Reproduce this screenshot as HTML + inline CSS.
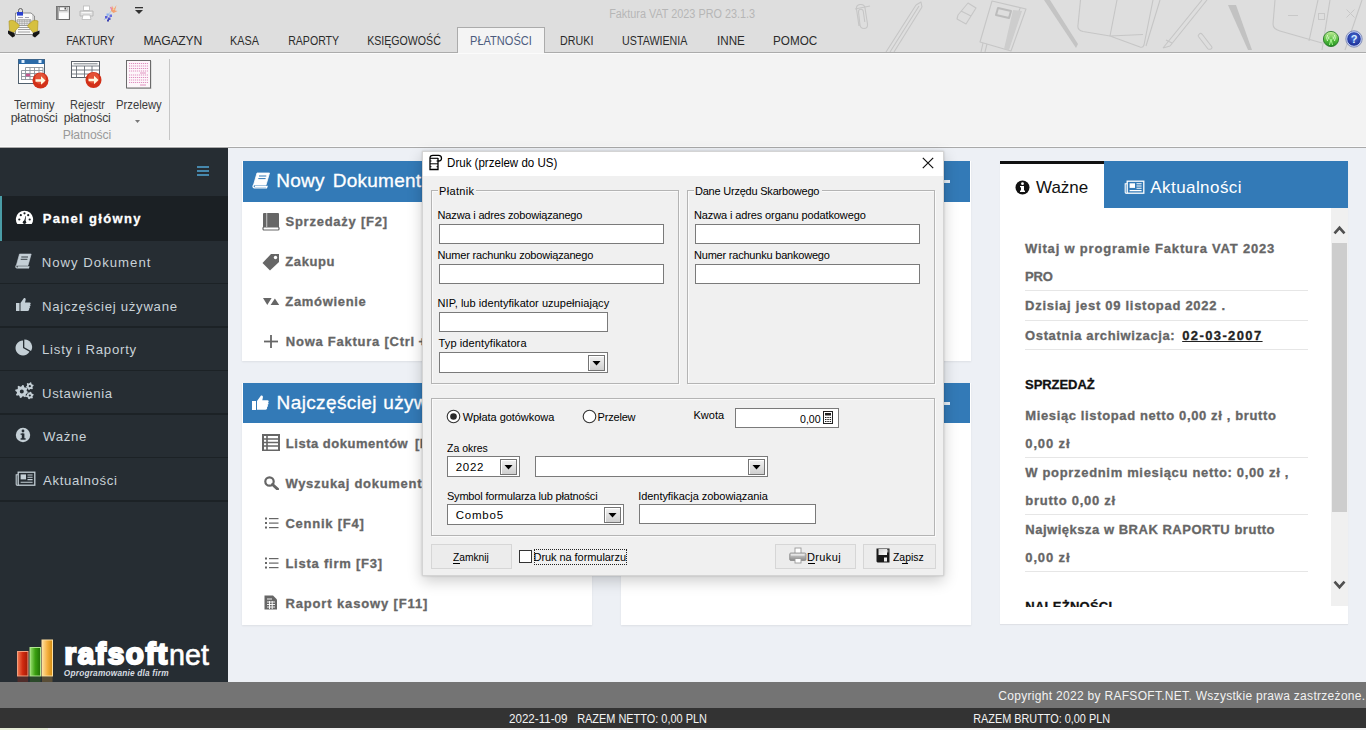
<!DOCTYPE html><html><head><meta charset="utf-8"><style>html,body{margin:0;padding:0;width:1366px;height:730px;overflow:hidden;position:relative;background:#fff;}</style></head><body><div style="position:absolute;left:0px;top:0px;width:1366px;height:52px;background:#dedede"></div>
<div style="position:absolute;left:0px;top:52px;width:1366px;height:1px;background:#ababab"></div>
<svg style="position:absolute;left:0px;top:0px;" width="1366" height="52" viewBox="0 0 1366 52">
<g fill="none" stroke="#c6c6c6" stroke-width="1.1" stroke-linejoin="round">
<path d="M859 26 L856.5 9 Q856 5 860 4.5 Q864.5 4 865 8 L867.5 24 Q868 28.5 864 28.5 Q860.5 28.5 860 25 L858.5 12 Q858.3 9.5 860.8 9.3 Q863 9.2 863.3 11.5 L864.8 22"/><path d="M855 9 L870 6"/>
<path d="M886 52 L916 5 M890 52 L919 6 M894 52 L922 7 M916 5 L921 2 L922 7"/>
<path d="M958 15 L968 3 L976 8 L966 24 L957 19 Z M961 11 L971 16"/>
<path d="M992 1 L1026 9 L1011 51 L980 42 Z M1020 8 L1007 50"/>
<path d="M998 8 L1011 11 L1009 18 L996 15 Z" stroke="#bcbcbc" stroke-width="2"/>
<path d="M983 43 L981 52 M987 44 L985 52"/>
<path d="M1080.5 0 L1078 25 Q1077 30 1083 31.5 L1110 36"/>
<path d="M1117 0 L1110 36 L1140 47 Q1143 48 1144 45 L1153 0 M1146 46 L1160 0 M1110 36 L1143 34.5"/>
<path d="M1163 48 L1202 0 M1170 46 L1207 0 M1163 48 L1170 46 M1166 40 L1172 43"/>
<path d="M1198 36 L1208 49 M1202 34 L1212 47 M1198 36 Q1200 32 1202 34 M1208 49 Q1212 50 1212 47"/>
<path d="M1275 0 L1273 24 Q1273 29 1280 31 L1322 43"/>
<path d="M1318 0 L1309 41 M1330 0 L1322 50 M1362 0 L1345 50"/>
</g>
<path d="M1044 0 L1050 0 L1078 44 L1076 48 Z" fill="#c4c4c4"/>
<path d="M1228 5 L1236 5 L1252 50 L1248 50 Z" fill="#c2c2c2"/>
<path d="M1013 10 L1022 11 L1009 50 L1004 49 Z" fill="#cdcdcd"/>
</svg>
<div style="position:absolute;left:1288px;top:15px;width:10px;height:1px;background:#c8c8c8"></div>
<div style="position:absolute;left:1318px;top:13px;width:7px;height:7px;border:1px solid #c8c8c8;box-sizing:border-box"></div>
<svg style="position:absolute;left:1346px;top:9px;" width="9" height="9" viewBox="0 0 9 9"><path d="M0.5 0.5 L8.5 8.5 M8.5 0.5 L0.5 8.5" stroke="#c8c8c8" stroke-width="1"/></svg>
<div style="position:absolute;left:609.00px;top:8px;font-family:'Liberation Sans',sans-serif;font-size:12.5px;font-weight:400;font-style:normal;line-height:12.5px;white-space:pre;color:#b6b6b6;letter-spacing:0.000px;transform:scaleX(0.8683);transform-origin:1px 0;">Faktura VAT 2023 PRO 23.1.3</div>
<div style="position:absolute;left:457px;top:27px;width:88px;height:27px;background:#f4f4f4;border:1px solid #ababab;border-bottom:none;box-sizing:border-box"></div>
<div style="position:absolute;left:66.30px;top:35px;font-family:'Liberation Sans',sans-serif;font-size:12.2px;font-weight:400;font-style:normal;line-height:12.2px;white-space:pre;color:#2b2b2b;letter-spacing:0.000px;transform:scaleX(0.8636);transform-origin:1px 0;">FAKTURY</div>
<div style="position:absolute;left:143.40px;top:35px;font-family:'Liberation Sans',sans-serif;font-size:12.2px;font-weight:400;font-style:normal;line-height:12.2px;white-space:pre;color:#2b2b2b;letter-spacing:-0.233px;">MAGAZYN</div>
<div style="position:absolute;left:230.30px;top:35px;font-family:'Liberation Sans',sans-serif;font-size:12.2px;font-weight:400;font-style:normal;line-height:12.2px;white-space:pre;color:#2b2b2b;letter-spacing:0.000px;transform:scaleX(0.8875);transform-origin:1px 0;">KASA</div>
<div style="position:absolute;left:288.30px;top:35px;font-family:'Liberation Sans',sans-serif;font-size:12.2px;font-weight:400;font-style:normal;line-height:12.2px;white-space:pre;color:#2b2b2b;letter-spacing:0.000px;transform:scaleX(0.8684);transform-origin:1px 0;">RAPORTY</div>
<div style="position:absolute;left:367.10px;top:35px;font-family:'Liberation Sans',sans-serif;font-size:12.2px;font-weight:400;font-style:normal;line-height:12.2px;white-space:pre;color:#2b2b2b;letter-spacing:0.000px;transform:scaleX(0.8711);transform-origin:1px 0;">KSIĘGOWOŚĆ</div>
<div style="position:absolute;left:469.70px;top:35px;font-family:'Liberation Sans',sans-serif;font-size:12.2px;font-weight:400;font-style:normal;line-height:12.2px;white-space:pre;color:#4c5b7e;letter-spacing:0.000px;transform:scaleX(0.9045);transform-origin:1px 0;">PŁATNOŚCI</div>
<div style="position:absolute;left:559.60px;top:35px;font-family:'Liberation Sans',sans-serif;font-size:12.2px;font-weight:400;font-style:normal;line-height:12.2px;white-space:pre;color:#2b2b2b;letter-spacing:0.000px;transform:scaleX(0.8778);transform-origin:1px 0;">DRUKI</div>
<div style="position:absolute;left:621.70px;top:35px;font-family:'Liberation Sans',sans-serif;font-size:12.2px;font-weight:400;font-style:normal;line-height:12.2px;white-space:pre;color:#2b2b2b;letter-spacing:0.000px;transform:scaleX(0.8757);transform-origin:1px 0;">USTAWIENIA</div>
<div style="position:absolute;left:716.50px;top:35px;font-family:'Liberation Sans',sans-serif;font-size:12.2px;font-weight:400;font-style:normal;line-height:12.2px;white-space:pre;color:#2b2b2b;letter-spacing:0.000px;transform:scaleX(0.9536);transform-origin:1px 0;">INNE</div>
<div style="position:absolute;left:772.50px;top:35px;font-family:'Liberation Sans',sans-serif;font-size:12.2px;font-weight:400;font-style:normal;line-height:12.2px;white-space:pre;color:#2b2b2b;letter-spacing:0.000px;transform:scaleX(0.9600);transform-origin:1px 0;">POMOC</div>
<svg style="position:absolute;left:0px;top:0px;" width="48" height="42" viewBox="0 0 48 42">
<path d="M15.5 13 H31 L34.5 16 V34.5 H15.5 Z" fill="#fafafa" stroke="#777" stroke-width="0.8"/>
<path d="M33 15 V33" stroke="#999" stroke-width="0.8"/>
<path d="M18 17.5 h5 M25 17.5 h4" stroke="#8a8aa0" stroke-width="0.8"/>
<path d="M17 19.8 H31 V25.5 H17 Z" fill="#e4e4e4" stroke="#777" stroke-width="0.7"/>
<path d="M17 21.6 H31 M17 23.5 H31 M19.5 19.8 V25.5 M22 19.8 V25.5 M24.5 19.8 V25.5 M27 19.8 V25.5 M29.5 19.8 V25.5" stroke="#999" stroke-width="0.5"/>
<path d="M18 27.5 h12 M18 29.5 h12 M18 32 h12" stroke="#888" stroke-width="0.8"/>
<path d="M18.5 12.5 V10.5 A2 2 0 0 1 22.5 10.5 V12.5" fill="none" stroke="#555" stroke-width="0.9"/>
<rect x="17" y="12" width="6" height="3.6" fill="#2a40d0"/>
<path d="M9 21 Q12 19.5 14.5 21 L19 25 Q20 26.5 18.5 27 L16 30 L14 32.5 L9.5 31 Z" fill="#d6c040" stroke="#a89020" stroke-width="0.6"/>
<path d="M38 21 Q35 19.5 32.5 21 L28 25 Q27 26.5 28.5 27 L31 30 L33 32.5 L37.5 31 Z" fill="#d6c040" stroke="#a89020" stroke-width="0.6"/>
<path d="M8 30.5 L14.5 33 L15 36 L12.5 37.5 L8 33.5 Z" fill="#151515"/>
<path d="M39.5 30.5 L33 33 L32.5 36 L35 37.5 L39.5 33.5 Z" fill="#151515"/>
</svg>
<svg style="position:absolute;left:56px;top:6px;" width="14" height="14" viewBox="0 0 14 14"><rect x="0.5" y="0.5" width="13" height="13" fill="#d9d9d9" stroke="#6a6a6a"/><rect x="0.5" y="0.5" width="2" height="13" fill="#8a8a8a"/><rect x="3.5" y="1" width="7.5" height="3.5" fill="#fafafa" stroke="#777" stroke-width="0.6"/><rect x="8.5" y="1.5" width="1.5" height="2" fill="#555"/><rect x="3" y="6.5" width="9.5" height="6.5" fill="#fbfbfb"/></svg>
<svg style="position:absolute;left:79px;top:5px;" width="15" height="15" viewBox="0 0 15 15"><rect x="4.5" y="1" width="6" height="4.5" fill="#fff" stroke="#bbb" stroke-width="0.8"/><path d="M1 6 h13 v5 h-13z" fill="#e2e2e2" stroke="#b0b0b0" stroke-width="0.8"/><rect x="2.5" y="7" width="10" height="1" fill="#f8f8f8"/><path d="M4 10 h7 l1 4.5 h-9z" fill="#fff" stroke="#b8b8b8" stroke-width="0.8"/></svg>
<svg style="position:absolute;left:102px;top:4px;" width="16" height="18" viewBox="0 0 16 18"><path d="M2 16 L10 6" stroke="#a8c8e8" stroke-width="1"/><rect x="3" y="12" width="2.5" height="2.5" fill="#5a60d8"/><rect x="6" y="13.5" width="2.5" height="2.5" fill="#4a50c8"/><rect x="4.5" y="9.5" width="2.2" height="2.2" fill="#8ab0f0"/><rect x="7.5" y="10.5" width="2.5" height="2.5" fill="#6a70e0"/><rect x="5" y="15.5" width="2" height="2" fill="#3a40b0"/><path d="M9 7 L10 1.5 L11.5 5.5 L14.5 1 L13 6.5 L15.5 7 L11.5 9 Z" fill="#f4a070"/><path d="M10.5 6 L11.5 3 L12.5 6 Z" fill="#f8d090"/><path d="M8.5 3 L10 6" stroke="#e880b0" stroke-width="1.2"/></svg>
<svg style="position:absolute;left:135px;top:7px;" width="9" height="8" viewBox="0 0 9 8"><rect x="0" y="0" width="8" height="1.3" fill="#333"/><path d="M0 3 L8 3 L4 7z" fill="#333"/></svg>
<svg style="position:absolute;left:1322px;top:30px;" width="18" height="18" viewBox="0 0 18 18"><defs><linearGradient id="gng" x1="0" y1="0" x2="0" y2="1"><stop offset="0" stop-color="#c8f0a0"/><stop offset="0.55" stop-color="#58c040"/><stop offset="1" stop-color="#208a20"/></linearGradient></defs><circle cx="9" cy="9" r="7.6" fill="url(#gng)" stroke="#2a7a2a" stroke-width="0.9"/><path d="M9 9 L7.5 15 M9 9 L10.5 15" stroke="#a8f890" stroke-width="1"/><path d="M5.5 5 Q4 8 5.5 11 M12.5 5 Q14 8 12.5 11 M7 6.5 Q6.3 8 7 9.5 M11 6.5 Q11.7 8 11 9.5" fill="none" stroke="#e8ffd8" stroke-width="0.9"/></svg>
<svg style="position:absolute;left:1345px;top:30px;" width="18" height="18" viewBox="0 0 18 18"><defs><radialGradient id="gbl" cx="0.5" cy="0.4" r="0.6"><stop offset="0" stop-color="#4a70d8"/><stop offset="1" stop-color="#1a2a90"/></radialGradient></defs><circle cx="9" cy="9" r="7.3" fill="url(#gbl)" stroke="#c8d8ff" stroke-width="1"/><circle cx="9" cy="9" r="8.2" fill="none" stroke="#4a5aa0" stroke-width="0.6"/><text x="9" y="13" font-family="Liberation Sans" font-weight="bold" font-size="11" fill="#d8f0ff" text-anchor="middle">?</text></svg>
<div style="position:absolute;left:0px;top:53px;width:1366px;height:94px;background:#f3f3f3"></div>
<div style="position:absolute;left:0px;top:53px;width:1366px;height:1px;background:#fbfbfb"></div>
<div style="position:absolute;left:0px;top:146px;width:1366px;height:1px;background:#fafafa"></div>
<div style="position:absolute;left:0px;top:147px;width:1366px;height:1px;background:#a9a9a9"></div>
<div style="position:absolute;left:169px;top:59px;width:1px;height:81px;background:#c6c6c6"></div>
<svg style="position:absolute;left:0px;top:53px;" width="170" height="40" viewBox="0 0 170 40">
<g transform="translate(0,-53)">
<rect x="18.5" y="59.5" width="26" height="24" fill="#fff" stroke="#50606e"/>
<rect x="18.5" y="59.5" width="26" height="4.5" fill="#2a6aa8"/>
<rect x="21.5" y="60" width="3" height="3" fill="#e0f0ff"/><rect x="38.5" y="60" width="3" height="3" fill="#e0f0ff"/>
<g fill="none" stroke="#8a9298" stroke-width="0.9">
<path d="M25.5 67.5 H43 M21.5 70.5 H43 M21.5 73.5 H43 M21.5 76.5 H43 M21.5 79.5 H35"/>
<path d="M25.5 67.5 V80 M30 67.5 V80 M34.5 67.5 V80 M39 67.5 V76 M43 67.5 V76 M21.5 70.5 V80"/>
</g>
<rect x="26" y="73.8" width="4" height="2.5" fill="#c85890"/>
<circle cx="40.5" cy="80.5" r="8" fill="#d23018"/>
<circle cx="40.5" cy="78.5" r="5.5" fill="#f07050" opacity="0.55"/>
<path d="M35.5 79.3 h5.5 v-3 l4.5 4.2 -4.5 4.2 v-3 h-5.5z" fill="#fff8e0"/>
<rect x="71.5" y="61.5" width="28" height="16" fill="#fff" stroke="#5a6068"/>
<path d="M73.5 63.8 H97.5" stroke="#6a7078" stroke-width="0.9"/>
<g fill="none" stroke="#6a7078" stroke-width="0.9">
<path d="M71.5 66 H99.5 M71.5 70 H99.5 M71.5 74 H99.5 M76.5 66 V77.5 M84.5 66 V77.5 M92 66 V77.5"/>
</g>
<circle cx="93.5" cy="80" r="8" fill="#d23018"/>
<circle cx="93.5" cy="78" r="5.5" fill="#f07050" opacity="0.55"/>
<path d="M88.5 78.8 h5.5 v-3 l4.5 4.2 -4.5 4.2 v-3 h-5.5z" fill="#fff8e0"/>
<rect x="127.5" y="61" width="24" height="28" fill="#7a7a7a" opacity="0.35"/>
<rect x="126.5" y="60.5" width="24" height="27.5" fill="#fdf6fa" stroke="#6a6a6a"/>
<g stroke="#e090c0" stroke-width="1" stroke-dasharray="1.2 0.8">
<path d="M129 63.5 H148 M129 66 H148 M129 68.5 H148 M129 71 H148 M129 75 H148 M129 77.5 H148 M129 80 H148 M129 82.5 H148"/>
</g>
<path d="M140 73 H146 M140 85 H146" stroke="#d878b0" stroke-width="0.8"/>
</g>
</svg>
<div style="position:absolute;left:14.00px;top:99px;font-family:'Liberation Sans',sans-serif;font-size:12.2px;font-weight:400;font-style:normal;line-height:12.2px;white-space:pre;color:#3c3c3c;letter-spacing:0.000px;transform:scaleX(0.9535);transform-origin:0px 0;">Terminy</div>
<div style="position:absolute;left:10.70px;top:112px;font-family:'Liberation Sans',sans-serif;font-size:12.2px;font-weight:400;font-style:normal;line-height:12.2px;white-space:pre;color:#3c3c3c;letter-spacing:-0.125px;">płatności</div>
<div style="position:absolute;left:69.50px;top:99px;font-family:'Liberation Sans',sans-serif;font-size:12.2px;font-weight:400;font-style:normal;line-height:12.2px;white-space:pre;color:#3c3c3c;letter-spacing:0.000px;transform:scaleX(0.9000);transform-origin:1px 0;">Rejestr</div>
<div style="position:absolute;left:63.80px;top:112px;font-family:'Liberation Sans',sans-serif;font-size:12.2px;font-weight:400;font-style:normal;line-height:12.2px;white-space:pre;color:#3c3c3c;letter-spacing:-0.137px;">płatności</div>
<div style="position:absolute;left:115.50px;top:99px;font-family:'Liberation Sans',sans-serif;font-size:12.2px;font-weight:400;font-style:normal;line-height:12.2px;white-space:pre;color:#3c3c3c;letter-spacing:0.000px;transform:scaleX(0.9224);transform-origin:1px 0;">Przelewy</div>
<svg style="position:absolute;left:135px;top:120px;" width="5" height="3" viewBox="0 0 5 3"><path d="M0 0h5l-2.5 3z" fill="#777"/></svg>
<div style="position:absolute;left:62.80px;top:129px;font-family:'Liberation Sans',sans-serif;font-size:12.2px;font-weight:400;font-style:normal;line-height:12.2px;white-space:pre;color:#9a9a9a;letter-spacing:-0.137px;">Płatności</div>
<div style="position:absolute;left:0px;top:148px;width:228px;height:534px;background:#262d33"></div>
<svg style="position:absolute;left:197px;top:166px;" width="12" height="11" viewBox="0 0 12 11"><rect y="0" width="12" height="2" fill="#4688ad"/><rect y="4" width="12" height="2" fill="#4688ad"/><rect y="8" width="12" height="2" fill="#4688ad"/></svg>
<div style="position:absolute;left:0px;top:196px;width:228px;height:44.5px;background:#1b2024"></div>
<div style="position:absolute;left:0px;top:196px;width:2px;height:44.5px;background:#4a9ca6"></div>
<div style="position:absolute;left:0px;top:282.5px;width:228px;height:1.5px;background:#1c2226"></div>
<div style="position:absolute;left:0px;top:326px;width:228px;height:1.5px;background:#1c2226"></div>
<div style="position:absolute;left:0px;top:369.5px;width:228px;height:1.5px;background:#1c2226"></div>
<div style="position:absolute;left:0px;top:413px;width:228px;height:1.5px;background:#1c2226"></div>
<div style="position:absolute;left:0px;top:456.5px;width:228px;height:1.5px;background:#1c2226"></div>
<div style="position:absolute;left:0px;top:500px;width:228px;height:1.5px;background:#1c2226"></div>
<div style="position:absolute;left:42.70px;top:212px;font-family:'Liberation Sans',sans-serif;font-size:13px;font-weight:700;font-style:normal;line-height:13px;white-space:pre;color:#ffffff;letter-spacing:1.336px;-webkit-text-stroke:0.3px #ffffff;">Panel główny</div>
<div style="position:absolute;left:41.70px;top:256px;font-family:'Liberation Sans',sans-serif;font-size:13.2px;font-weight:400;font-style:normal;line-height:13.2px;white-space:pre;color:#c9d2d8;letter-spacing:1.000px;">Nowy Dokument</div>
<div style="position:absolute;left:42.00px;top:300px;font-family:'Liberation Sans',sans-serif;font-size:13.2px;font-weight:400;font-style:normal;line-height:13.2px;white-space:pre;color:#c9d2d8;letter-spacing:0.700px;">Najczęściej używane</div>
<div style="position:absolute;left:42.00px;top:343px;font-family:'Liberation Sans',sans-serif;font-size:13.2px;font-weight:400;font-style:normal;line-height:13.2px;white-space:pre;color:#c9d2d8;letter-spacing:0.757px;">Listy i Raporty</div>
<div style="position:absolute;left:42.00px;top:387px;font-family:'Liberation Sans',sans-serif;font-size:13.2px;font-weight:400;font-style:normal;line-height:13.2px;white-space:pre;color:#c9d2d8;letter-spacing:0.611px;">Ustawienia</div>
<div style="position:absolute;left:43.00px;top:430px;font-family:'Liberation Sans',sans-serif;font-size:13.2px;font-weight:400;font-style:normal;line-height:13.2px;white-space:pre;color:#c9d2d8;letter-spacing:0.675px;">Ważne</div>
<div style="position:absolute;left:43.00px;top:474px;font-family:'Liberation Sans',sans-serif;font-size:13.2px;font-weight:400;font-style:normal;line-height:13.2px;white-space:pre;color:#c9d2d8;letter-spacing:0.660px;">Aktualności</div>
<div style="position:absolute;left:228px;top:148px;width:1138px;height:534px;background:#edf0f5"></div>
<svg style="position:absolute;left:15px;top:209px;" width="19" height="16" viewBox="0 0 19 16"><path d="M2.3 15 A8.6 8.6 0 1 1 16.7 15 Z" fill="#fff"/><circle cx="4.3" cy="10.5" r="1.1" fill="#1b2024"/><circle cx="5.8" cy="6.2" r="1.1" fill="#1b2024"/><circle cx="9.5" cy="4.3" r="1.1" fill="#1b2024"/><circle cx="13.2" cy="6.2" r="1.1" fill="#1b2024"/><circle cx="14.7" cy="10.5" r="1.1" fill="#1b2024"/><path d="M8.6 13.5 L10.6 7 L11 7.2 L10.4 13.8z" fill="#1b2024"/><circle cx="9.5" cy="13.2" r="1.7" fill="#1b2024"/></svg>
<svg style="position:absolute;left:15px;top:253px;" width="17" height="16" viewBox="0 0 17 16"><path d="M4.5 1 H16.2 L13 12.5 H1.3 Z" fill="#c4cfd6" stroke="#c4cfd6" stroke-width="0.6" stroke-linejoin="round"/><path d="M1.3 12.5 Q0.2 14.5 2 15 H13.5 L13.8 13.8 H2.6" fill="none" stroke="#c4cfd6" stroke-width="1.2"/><path d="M6.3 4 H13 M5.7 6.3 H12.4" stroke="#262d33" stroke-width="0.9"/></svg>
<svg style="position:absolute;left:16px;top:297px;" width="15" height="15" viewBox="0 0 15 15"><rect x="0" y="6" width="3.5" height="8" fill="#c4cfd6"/><path d="M4.5 6 L8 1 C9.5 0.5 10 2 9.5 3.5 L9 5.5 H13.5 C15 5.5 15 7 14 7.5 C15 8 14.5 9.5 13.5 9.5 C14.3 10 14 11.5 13 11.7 C13.5 12.3 13 14 11.5 14 H4.5z" fill="#c4cfd6"/></svg>
<svg style="position:absolute;left:15px;top:339px;" width="18" height="17" viewBox="0 0 18 17"><path d="M8 9 L8 1.5 A7.5 7.5 0 1 0 14.5 12.75 Z" fill="#c4cfd6"/><path d="M9.3 8.2 L9.3 0.5 A7.5 7.5 0 0 1 16 11.9 Z" fill="#c4cfd6"/></svg>
<svg style="position:absolute;left:15px;top:382px;" width="19" height="18" viewBox="0 0 19 18"><path d="M7.45 2.93 L8.72 3.18 L9.16 5.09 L9.97 5.63 L11.90 5.31 L12.62 6.39 L11.58 8.05 L11.78 9.01 L13.37 10.15 L13.12 11.42 L11.21 11.86 L10.67 12.67 L10.99 14.60 L9.91 15.32 L8.25 14.28 L7.29 14.48 L6.15 16.07 L4.88 15.82 L4.44 13.91 L3.63 13.37 L1.70 13.69 L0.98 12.61 L2.02 10.95 L1.82 9.99 L0.23 8.85 L0.48 7.58 L2.39 7.14 L2.93 6.33 L2.61 4.40 L3.69 3.68 L5.35 4.72 L6.31 4.52 Z M8.80 9.50 A2.0 2.0 0 1 0 4.80 9.50 A2.0 2.0 0 1 0 8.80 9.50 Z M15.31 0.33 L16.29 0.60 L16.57 1.90 L17.10 2.43 L18.40 2.71 L18.67 3.69 L17.68 4.58 L17.48 5.31 L17.89 6.57 L17.17 7.29 L15.91 6.88 L15.18 7.08 L14.29 8.07 L13.31 7.80 L13.03 6.50 L12.50 5.97 L11.20 5.69 L10.93 4.71 L11.92 3.82 L12.12 3.09 L11.71 1.83 L12.43 1.11 L13.69 1.52 L14.42 1.32 Z M15.90 4.20 A1.1 1.1 0 1 0 13.70 4.20 A1.1 1.1 0 1 0 15.90 4.20 Z M15.31 9.63 L16.29 9.90 L16.57 11.20 L17.10 11.73 L18.40 12.01 L18.67 12.99 L17.68 13.88 L17.48 14.61 L17.89 15.87 L17.17 16.59 L15.91 16.18 L15.18 16.38 L14.29 17.37 L13.31 17.10 L13.03 15.80 L12.50 15.27 L11.20 14.99 L10.93 14.01 L11.92 13.12 L12.12 12.39 L11.71 11.13 L12.43 10.41 L13.69 10.82 L14.42 10.62 Z M15.90 13.50 A1.1 1.1 0 1 0 13.70 13.50 A1.1 1.1 0 1 0 15.90 13.50 Z" fill="#c4cfd6" fill-rule="evenodd"/></svg>
<svg style="position:absolute;left:15px;top:427px;" width="16" height="16" viewBox="0 0 16 16"><circle cx="8" cy="8" r="7.2" fill="#c4cfd6"/><rect x="6.8" y="6.5" width="2.6" height="5.5" fill="#262d33"/><rect x="5.6" y="11.2" width="5" height="1.5" fill="#262d33"/><rect x="5.6" y="6.5" width="2.8" height="1.3" fill="#262d33"/><circle cx="8" cy="4" r="1.4" fill="#262d33"/></svg>
<svg style="position:absolute;left:15px;top:471px;" width="21" height="15" viewBox="0 0 21 15"><rect x="3.2" y="1.2" width="16.6" height="13" fill="none" stroke="#c4cfd6" stroke-width="1.3"/><path d="M3.2 3.8 H1.2 V13.2 Q1.2 14.2 2.2 14.2 H3.2" stroke="#c4cfd6" stroke-width="1.1" fill="none"/><rect x="5.6" y="3.4" width="5.4" height="5" fill="#c4cfd6"/><path d="M12.5 4 H17.6 M12.5 6.3 H17.6 M12.5 8.6 H17.6 M5.6 11.3 H17.6" stroke="#c4cfd6" stroke-width="1.1"/></svg>
<svg style="position:absolute;left:16px;top:638px;" width="40" height="46" viewBox="0 0 40 46">
<defs><linearGradient id="gr" x1="0" x2="1"><stop offset="0" stop-color="#f07a50"/><stop offset="0.5" stop-color="#d02a10"/><stop offset="1" stop-color="#a01a05"/></linearGradient>
<linearGradient id="gg" x1="0" x2="1"><stop offset="0" stop-color="#9ae070"/><stop offset="0.5" stop-color="#3aa010"/><stop offset="1" stop-color="#207005"/></linearGradient>
<linearGradient id="go" x1="0" x2="1"><stop offset="0" stop-color="#ffe0a0"/><stop offset="0.5" stop-color="#f5b040"/><stop offset="1" stop-color="#d08a10"/></linearGradient></defs>
<rect x="1.5" y="13.5" width="10.5" height="24.5" fill="url(#gr)" stroke="#f0a080" stroke-width="1"/>
<rect x="14" y="9.5" width="10.5" height="28.5" fill="url(#gg)" stroke="#b0e890" stroke-width="1"/>
<rect x="26" y="2" width="10.5" height="36" fill="url(#go)" stroke="#ffe0a0" stroke-width="1"/>
<rect x="1.5" y="38.5" width="10.5" height="6" fill="#d02a10" opacity="0.25"/>
<rect x="14" y="38.5" width="10.5" height="6" fill="#3aa010" opacity="0.25"/>
<rect x="26" y="38.5" width="10.5" height="6" fill="#f5b040" opacity="0.25"/>
</svg>
<div style="position:absolute;left:64.60px;top:639px;font-family:'Liberation Sans',sans-serif;font-size:29.5px;font-weight:700;font-style:normal;line-height:29.5px;white-space:pre;color:#ffffff;letter-spacing:1.783px;-webkit-text-stroke:2.4px #fff">rafsoft</div>
<div style="position:absolute;left:168.90px;top:640px;font-family:'Liberation Sans',sans-serif;font-size:29.5px;font-weight:400;font-style:normal;line-height:29.5px;white-space:pre;color:#ffffff;letter-spacing:0.000px;transform:scaleX(0.9732);transform-origin:1px 0;-webkit-text-stroke:0.6px #fff">net</div>
<div style="position:absolute;left:63.80px;top:669px;font-family:'Liberation Sans',sans-serif;font-size:8.3px;font-weight:700;font-style:italic;line-height:8.3px;white-space:pre;color:#d8dde2;letter-spacing:0.195px;">Oprogramowanie dla firm</div>
<div style="position:absolute;left:242px;top:161px;width:350px;height:200px;background:#fff;box-shadow:0 1px 2px rgba(0,0,0,0.07)"></div>
<div style="position:absolute;left:243px;top:161px;width:348px;height:40.5px;background:#337ab7"></div>
<div style="position:absolute;left:242px;top:383px;width:350px;height:242px;background:#fff;box-shadow:0 1px 2px rgba(0,0,0,0.07)"></div>
<div style="position:absolute;left:243px;top:383px;width:348px;height:40px;background:#337ab7"></div>
<div style="position:absolute;left:621px;top:161px;width:350px;height:200px;background:#fff;box-shadow:0 1px 2px rgba(0,0,0,0.07)"></div>
<div style="position:absolute;left:622px;top:161px;width:348px;height:40.5px;background:#337ab7"></div>
<div style="position:absolute;left:621px;top:383px;width:350px;height:242px;background:#fff;box-shadow:0 1px 2px rgba(0,0,0,0.07)"></div>
<div style="position:absolute;left:622px;top:383px;width:348px;height:40px;background:#337ab7"></div>
<div style="position:absolute;left:943px;top:180px;width:7px;height:2.5px;background:#e8f0f8"></div>
<div style="position:absolute;left:943px;top:402px;width:7px;height:2.5px;background:#e8f0f8"></div>
<svg style="position:absolute;left:252px;top:172px;" width="19" height="17" viewBox="0 0 19 17"><path d="M5 1 H17.5 L14 13 H1.5 Z" fill="#fff" stroke="#fff" stroke-width="0.8" stroke-linejoin="round"/><path d="M1.5 13 Q0.3 15.3 2.3 15.8 H14.5 L15 14.4 H2.8" fill="none" stroke="#fff" stroke-width="1.3"/><path d="M7 4 H14.3 M6.3 6.6 H13.6" stroke="#337ab7" stroke-width="1"/></svg>
<div style="position:absolute;left:276.30px;top:171px;font-family:'Liberation Sans',sans-serif;font-size:19px;font-weight:400;font-style:normal;line-height:19px;white-space:pre;color:#ffffff;letter-spacing:0.233px;-webkit-text-stroke:0.3px #fff">Nowy</div>
<div style="position:absolute;left:332.80px;top:171px;font-family:'Liberation Sans',sans-serif;font-size:19px;font-weight:400;font-style:normal;line-height:19px;white-space:pre;color:#ffffff;letter-spacing:0.233px;-webkit-text-stroke:0.3px #fff">Dokument</div>
<svg style="position:absolute;left:252px;top:394px;" width="18" height="17" viewBox="0 0 18 17"><rect x="0" y="7" width="4" height="9" fill="#fff"/><path d="M5 7 L9 1.5 C10.7 1 11.3 2.5 10.8 4 L10.3 6.3 H15.5 C17 6.3 17 8 16 8.5 C17 9 16.7 10.7 15.5 10.8 C16.3 11.3 16 13 15 13.2 C15.5 14 15 15.8 13.3 15.8 H5z" fill="#fff"/></svg>
<div style="position:absolute;left:276.60px;top:393px;font-family:'Liberation Sans',sans-serif;font-size:19px;font-weight:400;font-style:normal;line-height:19px;white-space:pre;color:#ffffff;letter-spacing:0.380px;-webkit-text-stroke:0.3px #fff">Najczęściej</div>
<div style="position:absolute;left:383.20px;top:393px;font-family:'Liberation Sans',sans-serif;font-size:19px;font-weight:400;font-style:normal;line-height:19px;white-space:pre;color:#ffffff;letter-spacing:0.380px;-webkit-text-stroke:0.3px #fff">używane</div>
<svg style="position:absolute;left:262px;top:212px;" width="18" height="19" viewBox="0 0 18 19"><rect x="1" y="1" width="16" height="15" rx="1" fill="#666"/><rect x="1" y="15" width="16" height="3" rx="1" fill="#fff" stroke="#666" stroke-width="1.2"/><rect x="4" y="1" width="1.3" height="14" fill="#fff" opacity="0.5"/></svg>
<div style="position:absolute;left:285.50px;top:215px;font-family:'Liberation Sans',sans-serif;font-size:13px;font-weight:700;font-style:normal;line-height:13px;white-space:pre;color:#666;letter-spacing:0.754px;-webkit-text-stroke:0.3px #666;">Sprzedaży [F2]</div>
<svg style="position:absolute;left:262px;top:253px;" width="18" height="18" viewBox="0 0 18 18"><path d="M9 1 H17 V9 L8 17.5 L0.5 10z" fill="#666"/><circle cx="13.5" cy="4.5" r="1.7" fill="#fff"/></svg>
<div style="position:absolute;left:285.30px;top:255px;font-family:'Liberation Sans',sans-serif;font-size:13px;font-weight:700;font-style:normal;line-height:13px;white-space:pre;color:#666;letter-spacing:0.580px;-webkit-text-stroke:0.3px #666;">Zakupu</div>
<svg style="position:absolute;left:263px;top:298px;" width="17" height="7" viewBox="0 0 17 7"><path d="M0 0 H8.6 L4.3 6.9z" fill="#666"/><path d="M7.6 6.9 H16.2 L11.9 0.6z" fill="#666"/></svg>
<div style="position:absolute;left:285.30px;top:295px;font-family:'Liberation Sans',sans-serif;font-size:13px;font-weight:700;font-style:normal;line-height:13px;white-space:pre;color:#666;letter-spacing:0.678px;-webkit-text-stroke:0.3px #666;">Zamówienie</div>
<svg style="position:absolute;left:264px;top:335px;" width="14" height="13" viewBox="0 0 14 13"><rect x="0" y="5.6" width="14" height="1.8" fill="#666"/><rect x="6.1" y="0" width="1.8" height="13" fill="#666"/></svg>
<div style="position:absolute;left:285.80px;top:335px;font-family:'Liberation Sans',sans-serif;font-size:13px;font-weight:700;font-style:normal;line-height:13px;white-space:pre;color:#666;letter-spacing:0.753px;-webkit-text-stroke:0.3px #666;">Nowa Faktura [Ctrl</div>
<div style="position:absolute;left:418.50px;top:335px;font-family:'Liberation Sans',sans-serif;font-size:13px;font-weight:700;font-style:normal;line-height:13px;white-space:pre;color:#666;letter-spacing:0.753px;-webkit-text-stroke:0.3px #666;">+ N]</div>
<svg style="position:absolute;left:262px;top:434px;" width="18" height="17" viewBox="0 0 18 17"><rect x="1" y="1" width="16" height="15.5" fill="none" stroke="#666" stroke-width="2"/><path d="M1 5h16M1 8.5h16M1 12h16M5 1v15" stroke="#666" stroke-width="1.6"/></svg>
<div style="position:absolute;left:285.80px;top:437px;font-family:'Liberation Sans',sans-serif;font-size:13px;font-weight:700;font-style:normal;line-height:13px;white-space:pre;color:#666;letter-spacing:0.520px;-webkit-text-stroke:0.3px #666;">Lista dokumentów</div>
<div style="position:absolute;left:414.90px;top:437px;font-family:'Liberation Sans',sans-serif;font-size:13px;font-weight:700;font-style:normal;line-height:13px;white-space:pre;color:#666;letter-spacing:0.520px;-webkit-text-stroke:0.3px #666;">[F5]</div>
<svg style="position:absolute;left:264px;top:476px;" width="15" height="14" viewBox="0 0 15 14"><circle cx="5.5" cy="5.5" r="4.2" fill="none" stroke="#666" stroke-width="2.2"/><path d="M8.5 8.5 L13.5 13" stroke="#666" stroke-width="3" stroke-linecap="round"/></svg>
<div style="position:absolute;left:285.40px;top:477px;font-family:'Liberation Sans',sans-serif;font-size:13px;font-weight:700;font-style:normal;line-height:13px;white-space:pre;color:#666;letter-spacing:0.713px;-webkit-text-stroke:0.3px #666;">Wyszukaj dokument</div>
<svg style="position:absolute;left:265px;top:517px;" width="14" height="12" viewBox="0 0 14 12"><rect x="0" y="0.5" width="2" height="2" fill="#666"/><rect x="0" y="5" width="2" height="2" fill="#666"/><rect x="0" y="9.5" width="2" height="2" fill="#666"/><rect x="4" y="1" width="9.5" height="1.2" fill="#666"/><rect x="4" y="5.5" width="9.5" height="1.2" fill="#666"/><rect x="4" y="10" width="9.5" height="1.2" fill="#666"/></svg>
<div style="position:absolute;left:285.40px;top:517px;font-family:'Liberation Sans',sans-serif;font-size:13px;font-weight:700;font-style:normal;line-height:13px;white-space:pre;color:#666;letter-spacing:0.760px;-webkit-text-stroke:0.3px #666;">Cennik [F4]</div>
<svg style="position:absolute;left:265px;top:557px;" width="14" height="12" viewBox="0 0 14 12"><rect x="0" y="0.5" width="2" height="2" fill="#666"/><rect x="0" y="5" width="2" height="2" fill="#666"/><rect x="0" y="9.5" width="2" height="2" fill="#666"/><rect x="4" y="1" width="9.5" height="1.2" fill="#666"/><rect x="4" y="5.5" width="9.5" height="1.2" fill="#666"/><rect x="4" y="10" width="9.5" height="1.2" fill="#666"/></svg>
<div style="position:absolute;left:285.40px;top:557px;font-family:'Liberation Sans',sans-serif;font-size:13px;font-weight:700;font-style:normal;line-height:13px;white-space:pre;color:#666;letter-spacing:0.771px;-webkit-text-stroke:0.3px #666;">Lista firm [F3]</div>
<svg style="position:absolute;left:264px;top:595px;" width="14" height="15" viewBox="0 0 14 15"><path d="M0.5 0.5 H9 L13 4.5 V14.5 H0.5z" fill="#666"/><path d="M3 4h5M3 7h8M3 9.5h8M3 12h8M5.5 6v8M8.2 6v8" stroke="#fff" stroke-width="0.9"/></svg>
<div style="position:absolute;left:285.40px;top:597px;font-family:'Liberation Sans',sans-serif;font-size:13px;font-weight:700;font-style:normal;line-height:13px;white-space:pre;color:#666;letter-spacing:0.867px;-webkit-text-stroke:0.3px #666;">Raport kasowy [F11]</div>
<div style="position:absolute;left:1000px;top:161px;width:348px;height:463px;background:#fff;box-shadow:0 1px 1px rgba(0,0,0,0.06)"></div>
<div style="position:absolute;left:1000px;top:161px;width:104px;height:3px;background:#111"></div>
<div style="position:absolute;left:1104px;top:161px;width:244px;height:47px;background:#337ab7"></div>
<svg style="position:absolute;left:1015px;top:180px;" width="15" height="15" viewBox="0 0 15 15"><circle cx="7.5" cy="7.5" r="7" fill="#111"/><rect x="6" y="6" width="3" height="5.5" fill="#fff"/><rect x="5" y="10.5" width="5" height="1.5" fill="#fff"/><rect x="5" y="6" width="3" height="1.3" fill="#fff"/><circle cx="7.5" cy="3.7" r="1.4" fill="#fff"/></svg>
<div style="position:absolute;left:1036.00px;top:179px;font-family:'Liberation Sans',sans-serif;font-size:17px;font-weight:400;font-style:normal;line-height:17px;white-space:pre;color:#111;letter-spacing:0.000px;">Ważne</div>
<svg style="position:absolute;left:1124px;top:180px;" width="21" height="15" viewBox="0 0 21 15"><rect x="3.2" y="1.2" width="16.6" height="12" fill="none" stroke="#fff" stroke-width="1.3"/><path d="M3.2 3.8 H1.2 V12.2 Q1.2 13.2 2.2 13.2 H3.2" stroke="#fff" stroke-width="1.1" fill="none"/><rect x="5.6" y="3.3" width="5.4" height="4.6" fill="#fff"/><path d="M12.5 3.8 H17.6 M12.5 6 H17.6 M12.5 8.2 H17.6 M5.6 10.6 H17.6" stroke="#fff" stroke-width="1.1"/></svg>
<div style="position:absolute;left:1150.30px;top:179px;font-family:'Liberation Sans',sans-serif;font-size:17px;font-weight:400;font-style:normal;line-height:17px;white-space:pre;color:#ffffff;letter-spacing:0.430px;">Aktualności</div>
<div style="position:absolute;left:1331px;top:208px;width:17px;height:398px;background:#f0f0f0"></div>
<div style="position:absolute;left:1332px;top:242.5px;width:15px;height:269px;background:#cdcdcd"></div>
<svg style="position:absolute;left:1333px;top:225px;" width="13" height="10" viewBox="0 0 13 10"><path d="M1.5 8.3 L6.5 2.8 L11.5 8.3" fill="none" stroke="#505050" stroke-width="2.6"/></svg>
<svg style="position:absolute;left:1333px;top:580px;" width="13" height="10" viewBox="0 0 13 10"><path d="M1.5 1.7 L6.5 7.2 L11.5 1.7" fill="none" stroke="#505050" stroke-width="2.6"/></svg>
<div style="position:absolute;left:1025.10px;top:242px;font-family:'Liberation Sans',sans-serif;font-size:13px;font-weight:700;font-style:normal;line-height:13px;white-space:pre;color:#666;letter-spacing:0.806px;-webkit-text-stroke:0.3px #666;">Witaj w programie Faktura VAT 2023</div>
<div style="position:absolute;left:1025.10px;top:270px;font-family:'Liberation Sans',sans-serif;font-size:13px;font-weight:700;font-style:normal;line-height:13px;white-space:pre;color:#666;letter-spacing:-0.150px;-webkit-text-stroke:0.3px #666;">PRO</div>
<div style="position:absolute;left:1025px;top:290px;width:283px;height:1px;background:#e6e6e6"></div>
<div style="position:absolute;left:1025.10px;top:299px;font-family:'Liberation Sans',sans-serif;font-size:13px;font-weight:700;font-style:normal;line-height:13px;white-space:pre;color:#666;letter-spacing:0.720px;-webkit-text-stroke:0.3px #666;">Dzisiaj jest 09 listopad 2022 .</div>
<div style="position:absolute;left:1025px;top:320px;width:283px;height:1px;background:#e6e6e6"></div>
<div style="position:absolute;left:1025.10px;top:329px;font-family:'Liberation Sans',sans-serif;font-size:13px;font-weight:700;font-style:normal;line-height:13px;white-space:pre;color:#666;letter-spacing:0.619px;-webkit-text-stroke:0.3px #666;">Ostatnia archiwizacja:</div>
<div style="position:absolute;left:1182.20px;top:329px;font-family:'Liberation Sans',sans-serif;font-size:13px;font-weight:700;font-style:normal;line-height:13px;white-space:pre;color:#222;letter-spacing:1.389px;-webkit-text-stroke:0.3px #222;text-decoration:underline;text-underline-offset:1px">02-03-2007</div>
<div style="position:absolute;left:1025px;top:349px;width:283px;height:1px;background:#e6e6e6"></div>
<div style="position:absolute;left:1025.10px;top:378px;font-family:'Liberation Sans',sans-serif;font-size:13px;font-weight:700;font-style:normal;line-height:13px;white-space:pre;color:#111;letter-spacing:-0.071px;-webkit-text-stroke:0.3px #111;">SPRZEDAŻ</div>
<div style="position:absolute;left:1025.30px;top:409px;font-family:'Liberation Sans',sans-serif;font-size:13px;font-weight:700;font-style:normal;line-height:13px;white-space:pre;color:#666;letter-spacing:0.624px;-webkit-text-stroke:0.3px #666;">Miesiąc listopad netto 0,00 zł , brutto</div>
<div style="position:absolute;left:1025.30px;top:437px;font-family:'Liberation Sans',sans-serif;font-size:13px;font-weight:700;font-style:normal;line-height:13px;white-space:pre;color:#666;letter-spacing:0.867px;-webkit-text-stroke:0.3px #666;">0,00 zł</div>
<div style="position:absolute;left:1025px;top:457px;width:283px;height:1px;background:#e6e6e6"></div>
<div style="position:absolute;left:1025.30px;top:466px;font-family:'Liberation Sans',sans-serif;font-size:13px;font-weight:700;font-style:normal;line-height:13px;white-space:pre;color:#666;letter-spacing:0.668px;-webkit-text-stroke:0.3px #666;">W poprzednim miesiącu netto: 0,00 zł ,</div>
<div style="position:absolute;left:1025.30px;top:494px;font-family:'Liberation Sans',sans-serif;font-size:13px;font-weight:700;font-style:normal;line-height:13px;white-space:pre;color:#666;letter-spacing:0.746px;-webkit-text-stroke:0.3px #666;">brutto 0,00 zł</div>
<div style="position:absolute;left:1025px;top:514px;width:283px;height:1px;background:#e6e6e6"></div>
<div style="position:absolute;left:1025.30px;top:523px;font-family:'Liberation Sans',sans-serif;font-size:13px;font-weight:700;font-style:normal;line-height:13px;white-space:pre;color:#666;letter-spacing:0.513px;-webkit-text-stroke:0.3px #666;">Największa w BRAK RAPORTU brutto</div>
<div style="position:absolute;left:1025.30px;top:551px;font-family:'Liberation Sans',sans-serif;font-size:13px;font-weight:700;font-style:normal;line-height:13px;white-space:pre;color:#666;letter-spacing:0.867px;-webkit-text-stroke:0.3px #666;">0,00 zł</div>
<div style="position:absolute;left:1025px;top:571px;width:283px;height:1px;background:#e6e6e6"></div>
<div style="position:absolute;left:1025.30px;top:600px;font-family:'Liberation Sans',sans-serif;font-size:13px;font-weight:700;font-style:normal;line-height:13px;white-space:pre;color:#111;letter-spacing:0.256px;-webkit-text-stroke:0.3px #111;">NALEŻNOŚCI</div>
<div style="position:absolute;left:1000px;top:607px;width:332px;height:17px;background:#fff"></div>
<div style="position:absolute;left:0px;top:682px;width:1366px;height:26px;background:#747474"></div>
<div style="position:absolute;left:998.30px;top:690px;font-family:'Liberation Sans',sans-serif;font-size:12px;font-weight:400;font-style:normal;line-height:12px;white-space:pre;color:#f2f2f2;letter-spacing:0.300px;">Copyright 2022 by RAFSOFT.NET. Wszystkie prawa zastrzeżone.</div>
<div style="position:absolute;left:0px;top:708px;width:1366px;height:20px;background:#333333"></div>
<div style="position:absolute;left:0px;top:728px;width:1366px;height:2px;background:#f2f2f2"></div>
<div style="position:absolute;left:0px;top:728px;width:48px;height:2px;background:#e6ecd8"></div>
<div style="position:absolute;left:509.00px;top:712px;font-family:'Liberation Sans',sans-serif;font-size:13px;font-weight:400;font-style:normal;line-height:13px;white-space:pre;color:#f4f4f4;letter-spacing:0.000px;transform:scaleX(0.8923);transform-origin:0px 0;">2022-11-09</div>
<div style="position:absolute;left:577.40px;top:712px;font-family:'Liberation Sans',sans-serif;font-size:13px;font-weight:400;font-style:normal;line-height:13px;white-space:pre;color:#f4f4f4;letter-spacing:0.000px;transform:scaleX(0.8405);transform-origin:1px 0;">RAZEM NETTO: 0,00 PLN</div>
<div style="position:absolute;left:973.40px;top:712px;font-family:'Liberation Sans',sans-serif;font-size:13px;font-weight:400;font-style:normal;line-height:13px;white-space:pre;color:#f4f4f4;letter-spacing:0.000px;transform:scaleX(0.8358);transform-origin:1px 0;">RAZEM BRUTTO: 0,00 PLN</div>
<div style="position:absolute;left:422px;top:151px;width:522px;height:425px;background:#f0f0f0;border:1px solid #d4d4d4;box-sizing:border-box;box-shadow:0 0 2px rgba(0,0,0,0.18), 0 5px 14px rgba(0,0,0,0.2)"></div>
<div style="position:absolute;left:423px;top:152px;width:520px;height:24px;background:#ffffff"></div>
<svg style="position:absolute;left:428px;top:154px;" width="15" height="17" viewBox="0 0 15 17"><path d="M2 4 V15.5 H10 V4" fill="#fff" stroke="#000" stroke-width="1.3"/><path d="M2 4 Q2 1.3 5 1.3 H10.5 Q13.5 1.3 13.5 4.2 Q13.5 7 10.5 7 H10" fill="none" stroke="#000" stroke-width="1.3"/><path d="M2 4.3 H10" stroke="#000" stroke-width="1.1"/><path d="M2 9.8 H10" stroke="#000" stroke-width="1"/><path d="M2 7 h1.5 M8.5 7 h1.5 M2 12.7 h1.5 M8.5 12.7 h1.5" stroke="#000" stroke-width="0.9"/></svg>
<div style="position:absolute;left:446.80px;top:157px;font-family:'Liberation Sans',sans-serif;font-size:12.3px;font-weight:400;font-style:normal;line-height:12.3px;white-space:pre;color:#000;letter-spacing:0.000px;transform:scaleX(0.9379);transform-origin:1px 0;">Druk (przelew do US)</div>
<svg style="position:absolute;left:922px;top:157px;" width="12" height="12" viewBox="0 0 12 12"><path d="M0.8 0.8 L11.2 11.2 M11.2 0.8 L0.8 11.2" stroke="#111" stroke-width="1.2"/></svg>
<div style="position:absolute;left:431px;top:190px;width:248px;height:194px;border:1px solid #b4b4b4;box-sizing:border-box;box-shadow:inset 1px 1px 0 #fafafa, 1px 1px 0 #fafafa"></div>
<div style="position:absolute;left:437.6px;top:184px;width:38.89999999999998px;height:12px;background:#f0f0f0"></div>
<div style="position:absolute;left:439.10px;top:186px;font-family:'Liberation Sans',sans-serif;font-size:11px;font-weight:400;font-style:normal;line-height:11px;white-space:pre;color:#000;letter-spacing:0.317px;">Płatnik</div>
<div style="position:absolute;left:687px;top:190px;width:248px;height:194px;border:1px solid #b4b4b4;box-sizing:border-box;box-shadow:inset 1px 1px 0 #fafafa, 1px 1px 0 #fafafa"></div>
<div style="position:absolute;left:693.5px;top:184px;width:128.39999999999998px;height:12px;background:#f0f0f0"></div>
<div style="position:absolute;left:695.00px;top:186px;font-family:'Liberation Sans',sans-serif;font-size:11px;font-weight:400;font-style:normal;line-height:11px;white-space:pre;color:#000;letter-spacing:-0.219px;">Dane Urzędu Skarbowego</div>
<div style="position:absolute;left:437.60px;top:210px;font-family:'Liberation Sans',sans-serif;font-size:11px;font-weight:400;font-style:normal;line-height:11px;white-space:pre;color:#000;letter-spacing:-0.169px;">Nazwa i adres zobowiązanego</div>
<div style="position:absolute;left:439px;top:224px;width:225px;height:20px;background:#fff;border:1px solid #7a7a7a;box-sizing:border-box"></div>
<div style="position:absolute;left:437.60px;top:250px;font-family:'Liberation Sans',sans-serif;font-size:11px;font-weight:400;font-style:normal;line-height:11px;white-space:pre;color:#000;letter-spacing:-0.189px;">Numer rachunku zobowiązanego</div>
<div style="position:absolute;left:439px;top:264px;width:225px;height:20px;background:#fff;border:1px solid #7a7a7a;box-sizing:border-box"></div>
<div style="position:absolute;left:437.60px;top:298px;font-family:'Liberation Sans',sans-serif;font-size:11px;font-weight:400;font-style:normal;line-height:11px;white-space:pre;color:#000;letter-spacing:0.051px;">NIP, lub identyfikator uzupełniający</div>
<div style="position:absolute;left:439px;top:312px;width:169px;height:20px;background:#fff;border:1px solid #7a7a7a;box-sizing:border-box"></div>
<div style="position:absolute;left:438.60px;top:338px;font-family:'Liberation Sans',sans-serif;font-size:11px;font-weight:400;font-style:normal;line-height:11px;white-space:pre;color:#000;letter-spacing:0.100px;">Typ identyfikatora</div>
<div style="position:absolute;left:439px;top:352px;width:169px;height:21px;background:#fff;border:1px solid #7a7a7a;box-sizing:border-box"></div>
<div style="position:absolute;left:588px;top:355px;width:17px;height:16px;background:linear-gradient(#f2f2f2,#cfcfcf);border:1px solid #747474;box-sizing:border-box;box-shadow:inset 1px 1px 0 #fff"></div>
<svg style="position:absolute;left:592px;top:361px;" width="9" height="5" viewBox="0 0 9 5"><path d="M0.5 0 H8.5 L4.5 4.5z" fill="#000"/></svg>
<div style="position:absolute;left:694.00px;top:210px;font-family:'Liberation Sans',sans-serif;font-size:11px;font-weight:400;font-style:normal;line-height:11px;white-space:pre;color:#000;letter-spacing:-0.119px;">Nazwa i adres organu podatkowego</div>
<div style="position:absolute;left:695px;top:224px;width:225px;height:20px;background:#fff;border:1px solid #7a7a7a;box-sizing:border-box"></div>
<div style="position:absolute;left:694.00px;top:250px;font-family:'Liberation Sans',sans-serif;font-size:11px;font-weight:400;font-style:normal;line-height:11px;white-space:pre;color:#000;letter-spacing:-0.209px;">Numer rachunku bankowego</div>
<div style="position:absolute;left:695px;top:264px;width:225px;height:20px;background:#fff;border:1px solid #7a7a7a;box-sizing:border-box"></div>
<div style="position:absolute;left:431px;top:398px;width:504px;height:138px;border:1px solid #b4b4b4;box-sizing:border-box;box-shadow:inset 1px 1px 0 #fafafa, 1px 1px 0 #fafafa"></div>
<svg style="position:absolute;left:446px;top:409px;" width="15" height="15" viewBox="0 0 15 15"><circle cx="7.5" cy="7.5" r="6.3" fill="#fff" stroke="#333" stroke-width="1.1"/><circle cx="7.5" cy="7.5" r="3.3" fill="#2a2a2a"/></svg>
<div style="position:absolute;left:462.70px;top:412px;font-family:'Liberation Sans',sans-serif;font-size:11px;font-weight:400;font-style:normal;line-height:11px;white-space:pre;color:#000;letter-spacing:-0.047px;">Wpłata gotówkowa</div>
<svg style="position:absolute;left:582px;top:409px;" width="15" height="15" viewBox="0 0 15 15"><circle cx="7.5" cy="7.5" r="6.3" fill="#fff" stroke="#333" stroke-width="1.1"/></svg>
<div style="position:absolute;left:597.50px;top:412px;font-family:'Liberation Sans',sans-serif;font-size:11px;font-weight:400;font-style:normal;line-height:11px;white-space:pre;color:#000;letter-spacing:-0.183px;">Przelew</div>
<div style="position:absolute;left:693.40px;top:410px;font-family:'Liberation Sans',sans-serif;font-size:11px;font-weight:400;font-style:normal;line-height:11px;white-space:pre;color:#000;letter-spacing:0.050px;">Kwota</div>
<div style="position:absolute;left:735px;top:408px;width:104px;height:20px;background:#fff;border:1px solid #7a7a7a;box-sizing:border-box"></div>
<div style="position:absolute;left:799.50px;top:414px;font-family:'Liberation Sans',sans-serif;font-size:11px;font-weight:400;font-style:normal;line-height:11px;white-space:pre;color:#000;letter-spacing:0.000px;transform:scaleX(0.9619);transform-origin:0px 0;">0,00</div>
<svg style="position:absolute;left:823px;top:411px;" width="11" height="13" viewBox="0 0 11 13"><rect x="0.5" y="0.5" width="9" height="12" fill="#fff" stroke="#222"/><rect x="2" y="2" width="6" height="2.5" fill="#222"/><path d="M2 6.5h1.5M4.3 6.5h1.5M6.6 6.5h1.5M2 8.5h1.5M4.3 8.5h1.5M6.6 8.5h1.5M2 10.5h1.5M4.3 10.5h1.5M6.6 10.5h1.5" stroke="#222" stroke-width="1.2"/></svg>
<div style="position:absolute;left:446.90px;top:443px;font-family:'Liberation Sans',sans-serif;font-size:11px;font-weight:400;font-style:normal;line-height:11px;white-space:pre;color:#000;letter-spacing:0.000px;transform:scaleX(0.9535);transform-origin:0px 0;">Za okres</div>
<div style="position:absolute;left:447px;top:456px;width:73px;height:21px;background:#fff;border:1px solid #7a7a7a;box-sizing:border-box"></div>
<div style="position:absolute;left:500px;top:459px;width:17px;height:16px;background:linear-gradient(#f2f2f2,#cfcfcf);border:1px solid #747474;box-sizing:border-box;box-shadow:inset 1px 1px 0 #fff"></div>
<svg style="position:absolute;left:504px;top:465px;" width="9" height="5" viewBox="0 0 9 5"><path d="M0.5 0 H8.5 L4.5 4.5z" fill="#000"/></svg>
<div style="position:absolute;left:455.70px;top:462px;font-family:'Liberation Sans',sans-serif;font-size:11.5px;font-weight:400;font-style:normal;line-height:11.5px;white-space:pre;color:#000;letter-spacing:0.733px;">2022</div>
<div style="position:absolute;left:535px;top:456px;width:233px;height:21px;background:#fff;border:1px solid #7a7a7a;box-sizing:border-box"></div>
<div style="position:absolute;left:748px;top:459px;width:17px;height:16px;background:linear-gradient(#f2f2f2,#cfcfcf);border:1px solid #747474;box-sizing:border-box;box-shadow:inset 1px 1px 0 #fff"></div>
<svg style="position:absolute;left:752px;top:465px;" width="9" height="5" viewBox="0 0 9 5"><path d="M0.5 0 H8.5 L4.5 4.5z" fill="#000"/></svg>
<div style="position:absolute;left:446.90px;top:491px;font-family:'Liberation Sans',sans-serif;font-size:11px;font-weight:400;font-style:normal;line-height:11px;white-space:pre;color:#000;letter-spacing:-0.173px;">Symbol formularza lub płatności</div>
<div style="position:absolute;left:638.20px;top:491px;font-family:'Liberation Sans',sans-serif;font-size:11px;font-weight:400;font-style:normal;line-height:11px;white-space:pre;color:#000;letter-spacing:-0.048px;">Identyfikacja zobowiązania</div>
<div style="position:absolute;left:447px;top:504px;width:177px;height:21px;background:#fff;border:1px solid #7a7a7a;box-sizing:border-box"></div>
<div style="position:absolute;left:604px;top:507px;width:17px;height:16px;background:linear-gradient(#f2f2f2,#cfcfcf);border:1px solid #747474;box-sizing:border-box;box-shadow:inset 1px 1px 0 #fff"></div>
<svg style="position:absolute;left:608px;top:513px;" width="9" height="5" viewBox="0 0 9 5"><path d="M0.5 0 H8.5 L4.5 4.5z" fill="#000"/></svg>
<div style="position:absolute;left:455.70px;top:510px;font-family:'Liberation Sans',sans-serif;font-size:11.5px;font-weight:400;font-style:normal;line-height:11.5px;white-space:pre;color:#000;letter-spacing:0.800px;">Combo5</div>
<div style="position:absolute;left:639px;top:504px;width:177px;height:20px;background:#fff;border:1px solid #7a7a7a;box-sizing:border-box"></div>
<div style="position:absolute;left:431px;top:544px;width:81px;height:25px;background:#ececec;border:1px solid #d6d6d6;box-sizing:border-box"></div>
<div style="position:absolute;left:453.00px;top:552px;font-family:'Liberation Sans',sans-serif;font-size:11px;font-weight:400;font-style:normal;line-height:11px;white-space:pre;color:#000;letter-spacing:0.000px;transform:scaleX(0.9316);transform-origin:0px 0;text-decoration:underline;text-decoration-color:transparent">Zamknij</div>
<div style="position:absolute;left:453px;top:562.5px;width:7px;height:1px;background:#000"></div>
<div style="position:absolute;left:519px;top:550px;width:13px;height:13px;background:#fff;border:1px solid #333;box-sizing:border-box"></div>
<div style="position:absolute;left:534px;top:549px;width:93px;height:16px;border:1px dotted #222;box-sizing:border-box"></div>
<div style="position:absolute;left:533.50px;top:552px;font-family:'Liberation Sans',sans-serif;font-size:11px;font-weight:400;font-style:normal;line-height:11px;white-space:pre;color:#000;letter-spacing:-0.059px;">Druk na formularzu</div>
<div style="position:absolute;left:775px;top:544px;width:81px;height:25px;background:#ececec;border:1px solid #d6d6d6;box-sizing:border-box"></div>
<svg style="position:absolute;left:789px;top:547px;" width="18" height="17" viewBox="0 0 18 17"><defs><linearGradient id="pg" x1="0" y1="0" x2="0" y2="1"><stop offset="0" stop-color="#d8d8d8"/><stop offset="1" stop-color="#8a8a8a"/></linearGradient></defs><rect x="6" y="1" width="6" height="6" fill="#fff" stroke="#9a9a9a" stroke-width="0.9"/><rect x="0.7" y="6" width="16.3" height="7.5" rx="1.2" fill="url(#pg)" stroke="#8a8a8a" stroke-width="0.8"/><rect x="2" y="7.2" width="13.5" height="1.3" fill="#eee"/><rect x="6" y="11.5" width="6" height="4.5" fill="#fff" stroke="#9a9a9a" stroke-width="0.9"/></svg>
<div style="position:absolute;left:807.00px;top:552px;font-family:'Liberation Sans',sans-serif;font-size:11px;font-weight:400;font-style:normal;line-height:11px;white-space:pre;color:#000;letter-spacing:0.380px;">Drukuj</div>
<div style="position:absolute;left:808px;top:562.5px;width:7px;height:1px;background:#000"></div>
<div style="position:absolute;left:863px;top:544px;width:73px;height:25px;background:#ececec;border:1px solid #d6d6d6;box-sizing:border-box"></div>
<svg style="position:absolute;left:876px;top:548px;" width="14" height="15" viewBox="0 0 14 15"><defs><linearGradient id="fg" x1="0" y1="0" x2="1" y2="1"><stop offset="0" stop-color="#cfcfcf"/><stop offset="1" stop-color="#ffffff"/></linearGradient></defs><path d="M0.5 0.5 H13.5 V14.5 H1.5 L0.5 13.5 Z" fill="#1a1a1a"/><rect x="2.5" y="1" width="8.5" height="6" fill="url(#fg)"/><rect x="11.3" y="1.5" width="1" height="3" fill="#ddd"/><rect x="8" y="9.5" width="3" height="4" fill="#eee"/></svg>
<div style="position:absolute;left:893.40px;top:552px;font-family:'Liberation Sans',sans-serif;font-size:11px;font-weight:400;font-style:normal;line-height:11px;white-space:pre;color:#000;letter-spacing:0.000px;transform:scaleX(0.9469);transform-origin:0px 0;">Zapisz</div>
<div style="position:absolute;left:902px;top:562.5px;width:6px;height:1px;background:#000"></div></body></html>
